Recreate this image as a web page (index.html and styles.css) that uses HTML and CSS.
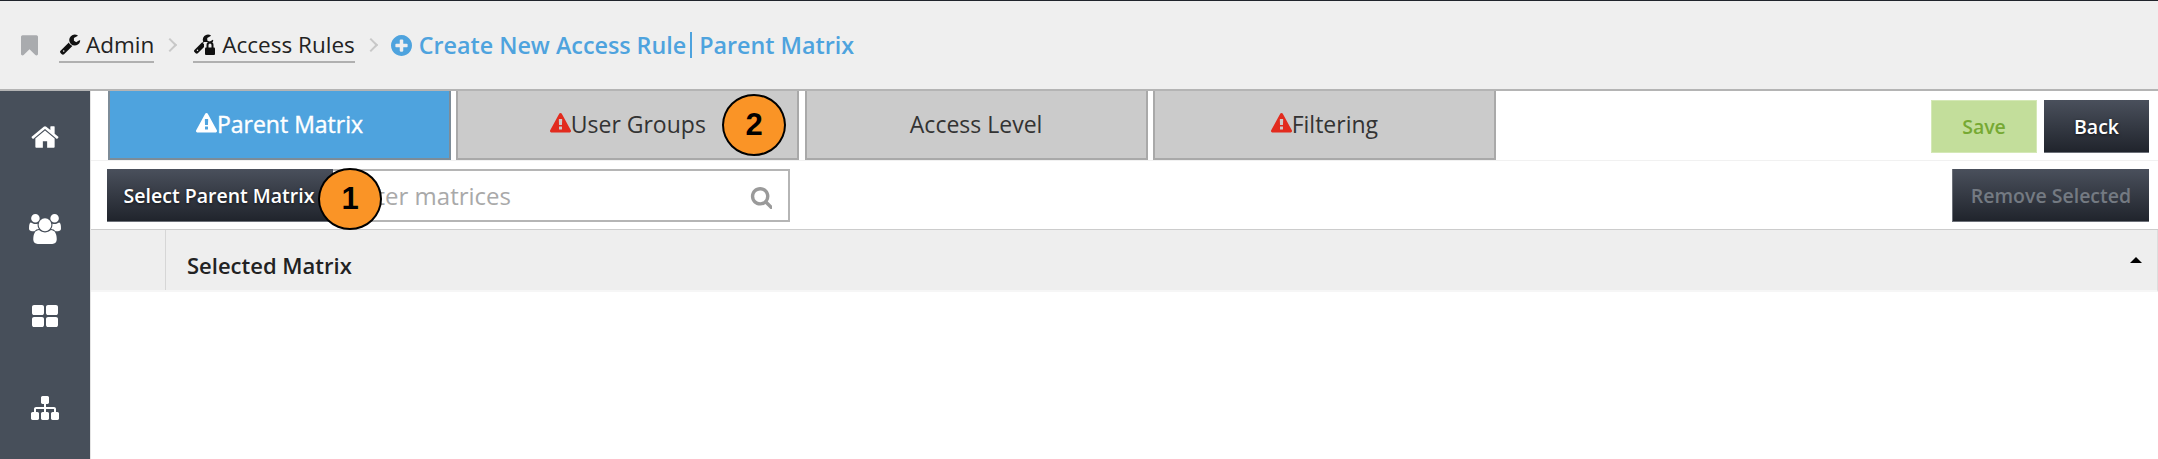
FILE: index.html
```html
<!DOCTYPE html>
<html lang="en">
  <head>
    <meta charset="UTF-8" />
    <meta name="viewport" content="width=device-width, initial-scale=1.0" />
    <title>Create New Access Rule</title>
    <link rel="stylesheet" href="styles.css">
  </head>

  <body>
    <svg class="defs" aria-hidden="true">
      <symbol id="i-wrench" viewBox="0 0 1792 1792"><path d="M448 1472q0-26-19-45t-45-19-45 19-19 45 19 45 45 19 45-19 19-45zm644-420l-682 682q-37 37-90 37-52 0-91-37l-106-108q-38-36-38-90 0-53 38-91l681-681q39 98 114.5 173.5t173.5 114.5zm634-435q0 39-23 106-47 134-164.5 217.5t-258.5 83.5q-185 0-316.5-131.5t-131.5-316.5 131.5-316.5 316.5-131.5q58 0 121.5 16.5t107.5 46.5q16 11 16 28t-16 28l-293 169v224l193 107q5-3 79-48.5t135.5-81 70.5-35.5q15 0 23.5 10t8.5 25z"/></symbol>
      <symbol id="i-warning" viewBox="0 0 1792 1792"><path d="M1024 1375v-190q0-14-9.5-23.5t-22.5-9.5h-192q-13 0-22.5 9.5t-9.5 23.5v190q0 14 9.5 23.5t22.5 9.5h192q13 0 22.5-9.5t9.5-23.5zm-2-374l18-459q0-12-10-19-13-11-24-11h-220q-11 0-24 11-10 7-10 21l17 457q0 10 10 16.5t24 6.5h185q14 0 23.5-6.5t10.5-16.5zm-14-934l768 1408q35 63-2 126-17 29-46.5 46t-63.5 17h-1536q-34 0-63.5-17t-46.5-46q-37-63-2-126l768-1408q17-31 47-49t65-18 65 18 47 49z"/></symbol>
    </svg>

    <header class="topbar">
      <svg class="bookmark" viewBox="256 128 1280 1536"><path d="M1420 128q23 0 44 9 33 13 52.5 41t19.5 62v1289q0 34-19.5 62t-52.5 41q-19 8-44 8-48 0-83-32l-441-424-441 424q-36 33-83 33-23 0-44-9-33-13-52.5-41t-19.5-62v-1289q0-34 19.5-62t52.5-41q21-9 44-9h1048z"/></svg>
      <a class="crumb">
        <svg class="crumb-icon"><use href="#i-wrench"/></svg>
        Admin
      </a>
      <span class="chevron"></span>
      <a class="crumb">
        <svg class="crumb-icon crumb-icon-lock" viewBox="0 0 24 22">
          <use href="#i-wrench" width="21" height="21" x="0" y="0"/>
          <rect x="11" y="9" width="13" height="13" fill="#efefef"/>
          <path d="M13.500 15v-3a3.500 3.500 0 0 1 7 0v3h-2v-3a1.500 1.500 0 0 0-3 0v3z"/>
          <rect x="12" y="14.500" width="10" height="7.500" rx="1"/>
        </svg>
        Access Rules
      </a>
      <span class="chevron"></span>
      <svg class="plus" viewBox="128 128 1536 1536"><path d="M1344 960v-128q0-26-19-45t-45-19h-256v-256q0-26-19-45t-45-19h-128q-26 0-45 19t-19 45v256h-256q-26 0-45 19t-19 45v128q0 26 19 45t45 19h256v256q0 26 19 45t45 19h128q26 0 45-19t19-45v-256h256q26 0 45-19t19-45zm320-64q0 209-103 385.5t-279.5 279.5-385.5 103-385.5-103-279.5-279.5-103-385.5 103-385.5 279.5-279.5 385.5-103 385.5 103 279.5 279.5 103 385.5z"/></svg>
      <h1 class="page-title">Create New Access Rule<span class="pipe"></span>Parent Matrix</h1>
    </header>

    <div class="layout">
      <aside class="sidebar">
        <div class="side-item">
          <svg class="icon-home" viewBox="0 0 1792 1792"><path d="M1472 992v480q0 26-19 45t-45 19h-384v-384h-256v384h-384q-26 0-45-19t-19-45v-480q0-1 .5-3t.5-3l575-474 575 474q1 2 1 6zm223-69l-62 74q-8 9-21 11h-3q-13 0-21-7l-692-577-692 577q-12 8-24 7-13-2-21-11l-62-74q-8-10-7-23.500t11-21.500l719-599q32-26 76-26t76 26l244 204v-195q0-14 9-23t23-9h192q14 0 23 9t9 23v408l219 182q10 8 11 21.500t-7 23.500z"/></svg>
        </div>
        <div class="side-item">
          <svg class="icon-users" viewBox="0 0 1920 1792"><path d="M593 896q-162 5-265 128h-134q-82 0-138-40.500t-56-118.500q0-353 124-353 6 0 43.500 21t97.500 42.500 119 21.500q67 0 133-23-5 37-5 66 0 139 81 256zm1071 637q0 120-73 189.500t-194 69.500h-874q-121 0-194-69.500t-73-189.500q0-53 3.500-103.500t14-109 26.500-108.500 43-97.500 62-81 85.500-53.500 111.500-20q10 0 43 21.500t73 48 107 48 135 21.500 135-21.500 107-48 73-48 43-21.500q61 0 111.500 20t85.500 53.500 62 81 43 97.500 26.500 108.500 14 109 3.500 103.500zm-1024-1277q0 106-75 181t-181 75-181-75-75-181 75-181 181-75 181 75 75 181zm704 384q0 159-112.500 271.500t-271.500 112.500-271.500-112.500-112.500-271.500 112.500-271.500 271.500-112.500 271.500 112.500 112.500 271.500zm576 225q0 78-56 118.500t-138 40.500h-134q-103-123-265-128 81-117 81-256 0-29-5-66 66 23 133 23 59 0 119-21.500t97.500-42.500 43.500-21q124 0 124 353zm-128-609q0 106-75 181t-181 75-181-75-75-181 75-181 181-75 181 75 75 181z"/></svg>
        </div>
        <div class="side-item">
          <svg class="icon-grid" viewBox="64 128 1664 1408" preserveAspectRatio="none"><path d="M832 1024v384q0 52-38 90t-90 38h-512q-52 0-90-38t-38-90v-384q0-52 38-90t90-38h512q52 0 90 38t38 90zm0-768v384q0 52-38 90t-90 38h-512q-52 0-90-38t-38-90v-384q0-52 38-90t90-38h512q52 0 90 38t38 90zm896 768v384q0 52-38 90t-90 38h-512q-52 0-90-38t-38-90v-384q0-52 38-90t90-38h512q52 0 90 38t38 90zm0-768v384q0 52-38 90t-90 38h-512q-52 0-90-38t-38-90v-384q0-52 38-90t90-38h512q52 0 90 38t38 90z"/></svg>
        </div>
        <div class="side-item">
          <svg class="icon-sitemap" viewBox="0 128 1792 1536"><path d="M1792 1248v320q0 40-28 68t-68 28h-320q-40 0-68-28t-28-68v-320q0-40 28-68t68-28h96v-192h-512v192h96q40 0 68 28t28 68v320q0 40-28 68t-68 28h-320q-40 0-68-28t-28-68v-320q0-40 28-68t68-28h96v-192h-512v192h96q40 0 68 28t28 68v320q0 40-28 68t-68 28h-320q-40 0-68-28t-28-68v-320q0-40 28-68t68-28h96v-192q0-52 38-90t90-38h512v-192h-96q-40 0-68-28t-28-68v-320q0-40 28-68t68-28h320q40 0 68 28t28 68v320q0 40-28 68t-68 28h-96v192h512q52 0 90 38t38 90v192h96q40 0 68 28t28 68z"/></svg>
        </div>
      </aside>

      <main class="content">
        <div class="tab-row">
          <div class="tabs">
            <div class="tab tab-active"><svg class="warn"><use href="#i-warning"/></svg>Parent Matrix</div>
            <div class="tab"><svg class="warn warn-red"><use href="#i-warning"/></svg>User Groups</div>
            <div class="tab">Access Level</div>
            <div class="tab"><svg class="warn warn-red"><use href="#i-warning"/></svg>Filtering</div>
          </div>
          <div class="actions">
            <button class="btn btn-save">Save</button>
            <button class="btn btn-dark btn-back">Back</button>
          </div>
        </div>

        <div class="filter-row">
          <button class="btn btn-dark btn-select">Select Parent Matrix</button>
          <div class="search">
            <input type="text" placeholder="Filter matrices" />
            <svg class="search-icon" viewBox="0 128 1664 1664"><path d="M1216 832q0-185-131.500-316.500t-316.500-131.500-316.500 131.500-131.500 316.500 131.500 316.500 316.500 131.500 316.500-131.500 131.500-316.500zm512 832q0 52-38 90t-90 38q-54 0-90-38l-343-342q-179 124-399 124-143 0-273.500-55.500t-225-150-150-225-55.500-273.500 55.500-273.500 150-225 225-150 273.500-55.500 273.500 55.500 225 150 150 225 55.500 273.500q0 220-124 399l343 343q37 37 37 90z"/></svg>
          </div>
          <button class="btn btn-dark btn-remove">Remove Selected</button>
        </div>

        <div class="table-head">
          <div class="check-col"></div>
          <div class="name-col">Selected Matrix</div>
          <span class="sort-arrow"></span>
        </div>

        <span class="badge badge-one">1</span>
        <span class="badge badge-two">2</span>
      </main>
    </div>
  </body>
</html>
```

FILE: styles.css
```css
* {
  box-sizing: border-box;
}

body {
  margin: 0;
  height: 459px;
  overflow: hidden;
  background-color: #fff;
  font-family: "Open Sans", "Liberation Sans", sans-serif;
  color: #333;
}

.defs {
  display: none;
}

/* top bar */
.topbar {
  display: flex;
  align-items: center;
  height: 91px;
  padding: 0 0 0 21px;
  background-color: #efefef;
  border-top: 1px solid #20242c;
  border-bottom: 2px solid #b4b4b4;
  font-size: 22.5px;
}

.bookmark {
  width: 17px;
  height: 21px;
  margin-right: 21px;
  fill: #a9abae;
}

.crumb {
  display: flex;
  align-items: center;
  gap: 5px;
  height: 36px;
  color: #222;
  border-bottom: 2px solid #b0b0b0;
  white-space: nowrap;
}

.crumb-icon {
  width: 22px;
  height: 22px;
  fill: #111;
}

.crumb-icon-lock {
  width: 24px;
}

.chevron {
  width: 10px;
  height: 10px;
  margin: 0 18px 0 11px;
  border-top: 2px solid #c8c8c8;
  border-right: 2px solid #c8c8c8;
  transform: rotate(45deg);
}

.plus {
  width: 21px;
  height: 21px;
  margin-right: 7px;
  margin-left: -3px;
  fill: #4ea3de;
}

.page-title {
  display: flex;
  align-items: center;
  margin: 0;
  font-size: 23.3px;
  font-weight: 600;
  color: #4ea3de;
  white-space: nowrap;
}

.pipe {
  width: 2px;
  height: 26px;
  margin: 0 7px 0 4px;
  background-color: #4ea3de;
}

/* page body */
.layout {
  display: flex;
  height: 368px;
}

.sidebar {
  flex: none;
  width: 90px;
  padding-top: 1px;
  background-color: #474f5a;
}

.side-item {
  display: flex;
  align-items: center;
  justify-content: center;
  height: 90px;
}

.side-item svg {
  fill: #fff;
}

.icon-home {
  width: 30px;
  height: 30px;
}

.icon-users {
  width: 32px;
  height: 30px;
  margin-top: 3px;
}

.icon-grid {
  width: 26px;
  height: 22px;
  margin-top: -2px;
}

.icon-sitemap {
  width: 28px;
  height: 24px;
  margin-top: 2px;
}

.content {
  position: relative;
  flex: 1;
  border-left: 1px solid #e4e4e4;
}

.tab-row {
  display: flex;
  justify-content: space-between;
  height: 70px;
  padding: 0 9px 0 17px;
  border-bottom: 1px solid #f1f1f1;
}

.tabs {
  display: flex;
  gap: 5.3px;
  height: 69px;
}

.tab {
  display: flex;
  align-items: center;
  justify-content: center;
  width: 343px;
  padding-bottom: 2px;
  background-color: #cbcbcb;
  border: 2px solid #a9a9a9;
  border-top: 0;
  font-size: 23px;
}

.tab-active {
  background-color: #4ea3de;
  border-color: #7d8c98;
  color: #fff;
  -webkit-text-stroke: 0.4px #fff;
}

.warn {
  width: 21px;
  height: 23px;
  fill: #fff;
}

.warn-red {
  fill: #e22b1e;
}

.actions {
  display: flex;
  gap: 7px;
  padding-top: 9px;
}

.btn {
  height: 53px;
  padding: 0;
  border: 0;
  font-family: inherit;
  font-size: 19.5px;
  font-weight: 600;
}

.btn-dark {
  background: linear-gradient(#4a505c, #20242c);
  border-bottom: 1px solid #6c7078;
  color: #fff;
  text-shadow: 0 1px 3px rgba(0, 0, 0, 0.6);
}

.btn-save {
  width: 106px;
  background-color: #c3de9b;
  border: 1px solid #d4e8b6;
  color: #76a933;
}

.btn-back {
  width: 105px;
}

.filter-row {
  display: flex;
  height: 69px;
  padding: 8px 9px 0 16px;
  border-bottom: 1px solid #ccc;
}

.btn-select {
  flex: none;
  width: 226px;
  padding-right: 2px;
}

.search {
  position: relative;
  width: 457px;
  height: 53px;
}

.search input {
  width: 100%;
  height: 100%;
  padding: 0 50px 0 19px;
  border: 2px solid #b5b5b5;
  border-left: 0;
  outline: 0;
  font-family: inherit;
  font-size: 24px;
  color: #333;
}

.search input::placeholder {
  color: #a9a9a9;
}

.search-icon {
  position: absolute;
  top: 18px;
  right: 18px;
  width: 22px;
  height: 22px;
  fill: #9a9a9a;
}

.btn-remove {
  width: 197px;
  margin-left: auto;
  border-left: 1px solid #6c7078;
  color: #747a82;
  text-shadow: none;
}

.table-head {
  display: flex;
  align-items: center;
  height: 62px;
  padding-right: 1px;
  background-color: #eee;
  border-right: 1px solid #ddd;
  border-bottom: 2px solid #f6f6f6;
  position: relative;
}

.check-col {
  width: 75px;
  height: 100%;
  border-right: 1px solid #d6d6d6;
}

.name-col {
  padding: 9px 0 0 21px;
  font-size: 22px;
  font-weight: 600;
  color: #222;
}

.sort-arrow {
  position: absolute;
  top: 27px;
  right: 15px;
  border-left: 6px solid transparent;
  border-right: 6px solid transparent;
  border-bottom: 6px solid #000;
}

/* numbered callouts drawn over the screen */
.badge {
  position: absolute;
  display: flex;
  align-items: center;
  justify-content: center;
  width: 64px;
  height: 62px;
  background-color: #fa9426;
  border: 2px solid #000;
  border-radius: 50%;
  font-family: "Liberation Sans", sans-serif;
  font-size: 31px;
  font-weight: 700;
  color: #000;
}

.badge-one {
  top: 77px;
  left: 227px;
}

.badge-two {
  top: 3px;
  left: 631px;
}
```
